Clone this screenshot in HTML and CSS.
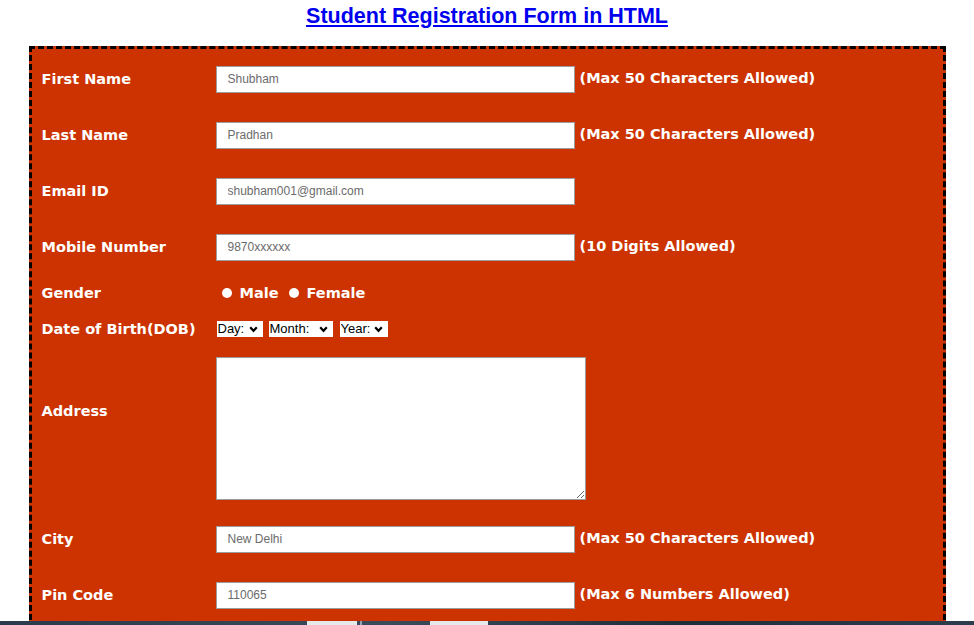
FILE: index.html
```html
<!DOCTYPE html>
<html>
<head>
<meta charset="utf-8">
<title>Student Registration Form in HTML</title>
<link rel="stylesheet" href="styles.css">
</head>
<body>
<h1 class="title"><a href="#">Student Registration Form in HTML</a></h1>
<form class="reg">
  <div class="row">
    <label class="lbl">First Name</label>
    <div class="field"><input class="txt" type="text" value="Shubham"><span class="hint">(Max 50 Characters Allowed)</span></div>
  </div>
  <div class="row">
    <label class="lbl">Last Name</label>
    <div class="field"><input class="txt" type="text" value="Pradhan"><span class="hint">(Max 50 Characters Allowed)</span></div>
  </div>
  <div class="row">
    <label class="lbl">Email ID</label>
    <div class="field"><input class="txt" type="text" value="shubham001@gmail.com"></div>
  </div>
  <div class="row">
    <label class="lbl">Mobile Number</label>
    <div class="field"><input class="txt" type="text" value="9870xxxxxx"><span class="hint">(10 Digits Allowed)</span></div>
  </div>
  <div class="row row-gender">
    <label class="lbl">Gender</label>
    <div class="field radios">
      <input class="radio" type="radio" name="g"><span class="rtext">Male</span>
      <input class="radio" type="radio" name="g"><span class="rtext">Female</span>
    </div>
  </div>
  <div class="row row-dob">
    <label class="lbl">Date of Birth(DOB)</label>
    <div class="field selects">
      <span class="sel sel-day"><select><option>Day:</option></select><svg class="chev" viewBox="0 0 9 7" width="9" height="7"><path d="M1.2 1.2 L4.5 4.8 L7.8 1.2" fill="none" stroke="#000" stroke-width="2.2"/></svg></span>
      <span class="sel sel-month"><select><option>Month:</option></select><svg class="chev" viewBox="0 0 9 7" width="9" height="7"><path d="M1.2 1.2 L4.5 4.8 L7.8 1.2" fill="none" stroke="#000" stroke-width="2.2"/></svg></span>
      <span class="sel sel-year"><select><option>Year:</option></select><svg class="chev" viewBox="0 0 9 7" width="9" height="7"><path d="M1.2 1.2 L4.5 4.8 L7.8 1.2" fill="none" stroke="#000" stroke-width="2.2"/></svg></span>
    </div>
  </div>
  <div class="row row-address">
    <label class="lbl">Address</label>
    <div class="field"><textarea class="area"></textarea></div>
  </div>
  <div class="row">
    <label class="lbl">City</label>
    <div class="field"><input class="txt" type="text" value="New Delhi"><span class="hint">(Max 50 Characters Allowed)</span></div>
  </div>
  <div class="row">
    <label class="lbl">Pin Code</label>
    <div class="field"><input class="txt" type="text" value="110065"><span class="hint">(Max 6 Numbers Allowed)</span></div>
  </div>
</form>
<div class="taskbar"><span class="tb-btn tb-a"></span><span class="tb-sep"></span><span class="tb-btn tb-b"></span></div>
</body>
</html>
```
FILE: styles.css
```css
html, body {
  margin: 0;
  padding: 0;
  background: #ffffff;
}
body {
  font-family: "DejaVu Sans", Verdana, sans-serif;
}
.title {
  margin: 2px 0 0 0;
  text-align: center;
  font-family: "Liberation Sans", Arial, sans-serif;
  font-size: 21.5px;
  line-height: 28px;
  font-weight: bold;
}
.title a {
  color: #0000ee;
  text-decoration: underline;
}
.reg {
  margin: 16px auto 0 auto;
  border: 3px dashed #000;
  background: #cc3300;
  padding: 2px 0 30px 10px;
  box-sizing: content-box;
  width: 901px;
}
.row {
  display: grid;
  grid-template-columns: 174px 1fr;
  align-items: center;
  height: 56px;
}
.lbl {
  color: #ffffff;
  font-weight: bold;
  font-size: 14.5px;
}
.field {
  display: flex;
  align-items: center;
}
.txt {
  box-sizing: border-box;
  width: 359px;
  height: 27px;
  margin: 0;
  border: 1px solid #9c9c9c;
  background: #fff;
  padding: 0 0 0 11px;
  font-family: "Liberation Sans", Arial, sans-serif;
  font-size: 12px;
  color: #6b6b6b;
  outline: none;
}
.hint {
  color: #ffffff;
  font-weight: bold;
  font-size: 14.5px;
  margin-left: 5px;
  position: relative;
  top: -1px;
}
.row-gender {
  height: 34px;
}
.row-gender .lbl {
  position: relative;
  top: 1px;
}
.radios {
  color: #fff;
  font-weight: bold;
  font-size: 14.5px;
  position: relative;
  top: 1px;
}
.radio {
  appearance: none;
  -webkit-appearance: none;
  width: 10px;
  height: 10px;
  border-radius: 50%;
  background: #ffffff;
  margin: 0 8px 0 6px;
  border: none;
}
.rtext + .radio {
  margin-left: 10px;
}
.row-dob {
  height: 40px;
}
.selects {
  gap: 6px;
  padding-left: 1px;
}
.sel {
  position: relative;
  display: inline-block;
  height: 16px;
}
.sel select {
  appearance: none;
  -webkit-appearance: none;
  box-sizing: border-box;
  height: 16px;
  margin: 0;
  border: none;
  background: #fff;
  font-family: "Liberation Sans", Arial, sans-serif;
  font-size: 13px;
  line-height: 16px;
  color: #000;
  padding: 0 0 0 1px;
  border-radius: 0;
  outline: none;
  display: block;
}
.sel-day select { width: 46px; }
.sel-month select { width: 64px; }
.sel-year select { width: 48px; }
.sel-year { margin-left: 1px; }
.chev {
  position: absolute;
  right: 5px;
  top: 5px;
}
.row-address {
  height: 162px;
  align-items: start;
}
.row-address .lbl {
  margin-top: 54px;
}
.area {
  box-sizing: border-box;
  width: 370px;
  height: 143px;
  margin: 8px 0 0 0;
  border: 1px solid #9c9c9c;
  background: #fff;
  display: block;
}
.taskbar {
  position: fixed;
  left: 0;
  right: 0;
  bottom: 0;
  height: 4px;
  background: linear-gradient(90deg, #2a3a4c 0%, #3b4b5b 40%, #1f2c3a 70%, #2e3d4e 100%);
  display: flex;
}
.tb-btn {
  height: 4px;
  background: #e6e8ea;
}
.tb-a {
  margin-left: 307px;
  width: 50px;
}
.tb-sep {
  width: 2px;
  margin-left: 3px;
  background: #9aa4ae;
}
.tb-b {
  margin-left: 68px;
  width: 58px;
}
```
